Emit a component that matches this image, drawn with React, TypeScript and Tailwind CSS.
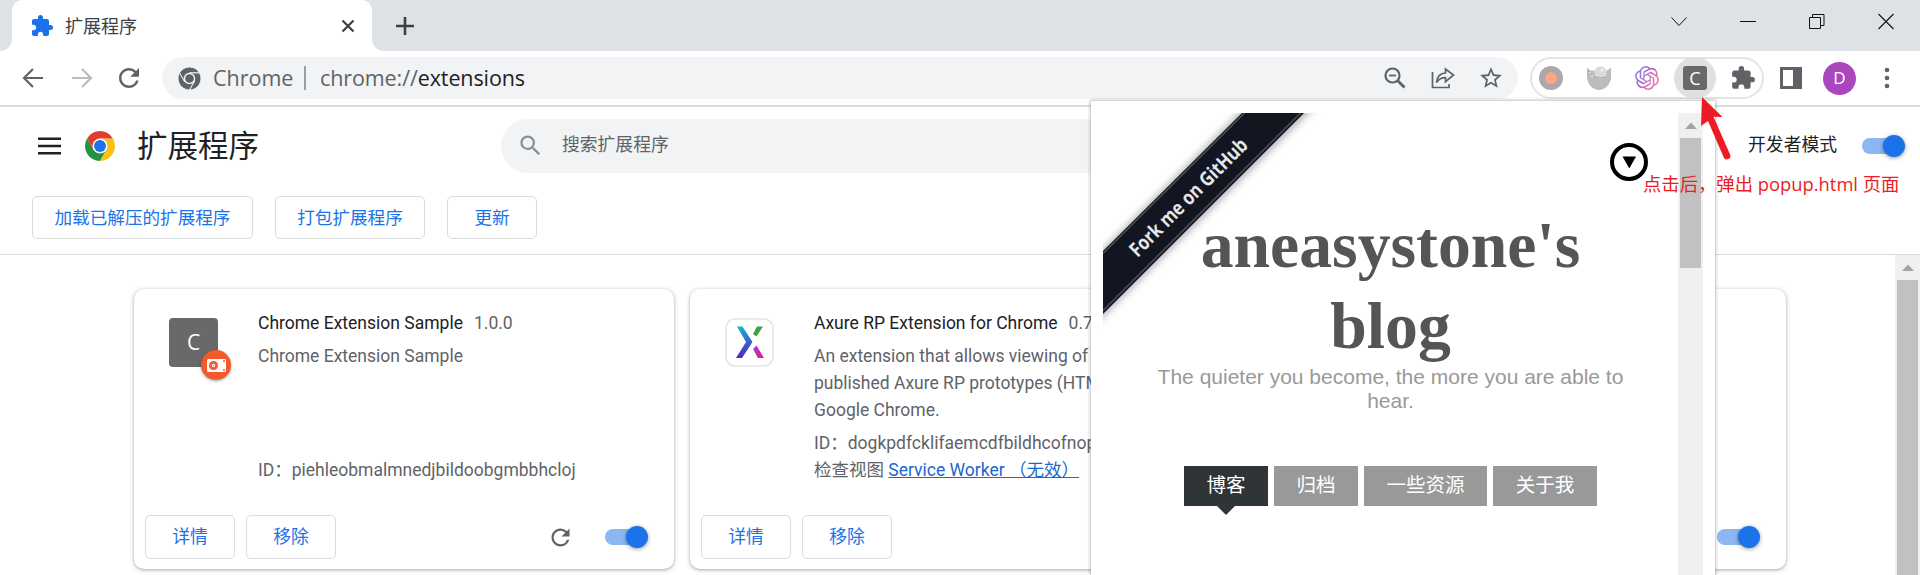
import React from "react";
import { MdExtension, MdRefresh, MdSearch, MdStarBorder } from "react-icons/md";
import { SiOpenai } from "react-icons/si";

const cjk = "font-['Roboto','Noto_Sans_CJK_SC',sans-serif]";

function ChromeLogo({ className, mono }: { className: string; mono?: boolean }) {
  const red = mono ? "#5f6368" : "#e33b2e";
  const green = mono ? "#5f6368" : "#229342";
  const yellow = mono ? "#5f6368" : "#fbc116";
  const gap = mono ? "#f1f3f4" : "none";
  return (
    <svg viewBox="0 0 48 48" className={className}>
      <g stroke={gap} strokeWidth={mono ? 2 : 0}>
        <path fill={green} d="M13.61 30 3.22 12A24 24 0 0 0 24 48l10.39-18z" />
        <path fill={yellow} d="M34.39 30 24 48A24 24 0 0 0 44.78 12H24z" />
        <path fill={red} d="M24 12h20.78A24 24 0 0 0 3.22 12l10.39 18z" />
      </g>
      <circle cx="24" cy="24" r="12" fill={mono ? "#f1f3f4" : "#fff"} />
      <circle cx="24" cy="24" r={mono ? 9 : 9.5} fill={mono ? "#5f6368" : "#1a73e8"} />
    </svg>
  );
}

function TabStrip() {
  return (
    <div className="flex h-[51px] shrink-0 bg-[#dee1e6]">
      <svg viewBox="0 0 12 12" className="h-3 w-3 self-end">
        <path d="M12 0v12H0A12 12 0 0 0 12 0z" fill="#fff" />
      </svg>
      <div className="flex w-[360px] items-center rounded-t-[10px] bg-white pl-[18px] pr-[17px] pt-[1px]">
        <MdExtension className="h-6 w-6 text-[#1a73e8]" />
        <span className="ml-[11px] text-[18px] text-[#3c4043]">扩展程序</span>
        <svg viewBox="0 0 14 14" className="ml-auto h-[14px] w-[14px]" stroke="#3c4043" strokeWidth="2.2">
          <path d="M1.5 1.5l11 11M12.500 1.5l-11 11" />
        </svg>
      </div>
      <svg viewBox="0 0 12 12" className="h-3 w-3 self-end">
        <path d="M0 0v12h12A12 12 0 0 1 0 0z" fill="#fff" />
      </svg>
      <svg viewBox="0 0 18 18" className="ml-3 mt-[17px] h-[18px] w-[18px]" stroke="#3c4043" strokeWidth="2.6">
        <path d="M9 0v18M0 9h18" />
      </svg>
      <div className="ml-auto mr-[26px] mt-[13px] flex h-[17px] items-center gap-[53px]">
        <svg viewBox="0 0 16 17" className="h-[17px] w-4" fill="none" stroke="#111" strokeWidth="1">
          <path d="M.5 4.500 8 12.500l7.500-8" />
        </svg>
        <svg viewBox="0 0 16 17" className="h-[17px] w-4" stroke="#111" strokeWidth="1">
          <path d="M0 8.500h16" />
        </svg>
        <svg viewBox="0 0 16 17" className="h-[17px] w-4" fill="none" stroke="#111" strokeWidth="1">
          <path d="M.5 4.500h11v11H.5zM3.500 4.500v-3h11.500v11h-3.500" />
        </svg>
        <svg viewBox="0 0 16 17" className="h-[17px] w-4" stroke="#111" strokeWidth="1.1">
          <path d="M.5 1l15 15M15.500 1l-15 15" />
        </svg>
      </div>
    </div>
  );
}

function Toolbar() {
  return (
    <div className="flex h-[56px] shrink-0 items-start border-b-2 border-[#dadce0] bg-white pt-[6px]">
      <div className="flex h-[42px] items-center pl-[22px]">
        <svg viewBox="0 0 22 20" className="h-5 w-[22px]" fill="none" stroke="#5f6368" strokeWidth="2.2">
          <path d="M21 10H2.500M11 1l-9 9 9 9" />
        </svg>
        <svg viewBox="0 0 22 20" className="ml-[27px] h-5 w-[22px]" fill="none" stroke="#babcbe" strokeWidth="2.2">
          <path d="M1 10h18.500M11 1l9 9-9 9" />
        </svg>
        <MdRefresh className="ml-[21px] h-[30px] w-[30px] text-[#5f6368]" />
      </div>
      <div className="ml-[18px] flex h-[42px] w-[1356px] items-center rounded-full bg-[#f1f3f4] pl-4 pr-[14px]">
        <ChromeLogo mono className="h-[23px] w-[23px]" />
        <span className="ml-[12px] flex items-center font-['Open_Sans','Noto_Sans',sans-serif] text-[21.5px] leading-none text-[#5f6368]">
          <span className="w-[91px]">Chrome</span>
          <span className="h-6 w-[2px] bg-[#9aa0a6]" />
          <span className="ml-[14px] tracking-[-0.1px]">
            chrome://<span className="text-[#202124]">extensions</span>
          </span>
        </span>
        <svg viewBox="0 0 22 22" className="ml-auto h-[22px] w-[22px]" fill="none" stroke="#5f6368" strokeWidth="2.2">
          <circle cx="8.500" cy="8.500" r="7" />
          <path d="M5 8.500h7" strokeWidth="1.800" />
          <path d="M13.500 13.500l7 7" strokeWidth="2.800" />
        </svg>
        <svg viewBox="0 0 24 22" className="ml-[25px] h-[22px] w-6" fill="none" stroke="#5f6368" strokeWidth="1.700">
          <path d="M1.500 5v15.500H18V17" />
          <path d="M14.500 2v4C9 6.300 6 9.500 5.500 15.500c2.500-3.800 5-4.800 9-4.800v4L22.500 8z" />
        </svg>
        <MdStarBorder className="ml-[23px] h-[26px] w-[26px] text-[#5f6368]" />
      </div>
      <div className="ml-3 flex h-[42px] w-[234px] items-center rounded-full border-2 border-[#e3e4e6] bg-white pl-[7px]">
        <span className="flex h-6 w-6 items-center justify-center rounded-full bg-[#a9a9a9]">
          <span className="h-3 w-3 rounded-full bg-[#ffa585]" />
        </span>
        <svg viewBox="0 0 24 24" className="ml-6 h-6 w-6">
          <path
            d="M0 1.500l3.500 3h17l3.500-3c.8 4 .6 9-.8 13.500C21.500 20.500 17 24 12 24S2.500 20.500.8 15C-.5 10.500-.5 5.500 0 1.500z"
            fill="#bcbcbc"
          />
          <circle cx="13.500" cy="6.500" r="6.300" fill="#dadada" />
          <path d="M1 4c2 5.500 9 9.500 18.500 7" fill="none" stroke="#a6a6a6" strokeWidth="1" />
          <circle cx="5" cy="10" r="1" fill="#eee" />
          <circle cx="3" cy="6.500" r=".8" fill="#eee" />
          <circle cx="15" cy="4" r="1.500" fill="#f2f2f2" />
        </svg>
        <span className="ml-6">
          <svg className="h-0 w-0" viewBox="0 0 1 1">
            <defs>
              <linearGradient id="gpt" x1="0" y1="0" x2="1" y2="0.6">
                <stop offset="0" stopColor="#7d9cf5" />
                <stop offset=".5" stopColor="#a865c4" />
                <stop offset="1" stopColor="#f07fa0" />
              </linearGradient>
            </defs>
          </svg>
          <SiOpenai className="h-6 w-6" style={{ fill: "url(#gpt)" }} />
        </span>
        <span className="ml-[15px] flex h-[42px] w-[42px] items-center justify-center rounded-full bg-[#e0e0e0]">
          <span className="flex h-6 w-6 items-center justify-center rounded-[3px] bg-[#696969] font-['Open_Sans',sans-serif] text-[18px] leading-none text-white">
            C
          </span>
        </span>
        <MdExtension className="ml-[14px] h-[26px] w-[26px] text-[#5f6368]" />
      </div>
      <div className="flex h-[42px] items-center">
        <span className="ml-4 flex h-[22px] w-[22px] justify-end border-[3px] border-r-0 border-[#5f6368]">
          <span className="h-full w-[9px] bg-[#5f6368]" />
        </span>
        <span className="ml-[21px] flex h-[33px] w-[33px] items-center justify-center rounded-full bg-[#ab47bc] font-['Open_Sans',sans-serif] text-[17px] text-white">
          D
        </span>
        <svg viewBox="0 0 6 22" className="ml-[28px] h-[22px] w-[6px]" fill="#5f6368">
          <circle cx="3" cy="3" r="2.300" />
          <circle cx="3" cy="11" r="2.300" />
          <circle cx="3" cy="19" r="2.300" />
        </svg>
      </div>
    </div>
  );
}

function Toggle() {
  return (
    <span className="flex h-[22px] w-[43px] items-center">
      <span className="h-4 w-[32px] rounded-l-full bg-[#8cb7f3]" />
      <span className="-ml-[11px] h-[22px] w-[22px] shrink-0 rounded-full bg-[#1a73e8] shadow-[0_1px_4px_rgba(0,0,0,0.4)]" />
    </span>
  );
}

function Btn({ children, className }: { children: React.ReactNode; className: string }) {
  return (
    <button className={`flex items-center justify-center rounded-[5px] border border-[#dadce0] pt-[1px] text-[#1a73e8] ${className}`}>
      {children}
    </button>
  );
}

function PageHeader() {
  return (
    <div className="flex h-[148px] shrink-0 flex-col border-b border-[#dadce0]">
      <div className="flex h-[77px] items-center pl-[38px]">
        <svg viewBox="0 0 23 18" className="h-[18px] w-[23px]" fill="#202124">
          <path d="M0 .5h23v2.500H0zM0 7.800h23v2.500H0zM0 15h23v2.500H0z" />
        </svg>
        <ChromeLogo className="ml-6 h-[30px] w-[30px]" />
        <h1 className="ml-[22px] w-[364px] pt-[3px] text-[30.5px] leading-none text-[#202124]">扩展程序</h1>
        <div className="flex h-[54px] w-[850px] items-center rounded-full bg-[#f1f3f4] pl-4">
          <MdSearch className="h-[27px] w-[27px] text-[#8a8d91]" />
          <span className="ml-[18px] text-[17.800px] text-[#5f6368]">搜索扩展程序</span>
        </div>
        <span className="ml-auto text-[17.800px] text-[#202124]">开发者模式</span>
        <span className="ml-[25px] mr-[15px]">
          <Toggle />
        </span>
      </div>
      <div className="mt-[12px] flex gap-[22px] pl-8">
        <Btn className="h-[43px] w-[221px] text-[17.600px]">加载已解压的扩展程序</Btn>
        <Btn className="h-[43px] w-[150px] text-[17.600px]">打包扩展程序</Btn>
        <Btn className="h-[43px] w-[90px] text-[17.600px]">更新</Btn>
      </div>
    </div>
  );
}

interface CardProps {
  icon: React.ReactNode;
  name: string;
  version: string;
  lines: string[];
  footer: React.ReactNode;
  reload?: boolean;
}

function Card({ icon, name, version, lines, footer, reload }: CardProps) {
  return (
    <div className="flex h-[280px] w-[540px] shrink-0 flex-col rounded-[10px] bg-white shadow-[0_1px_3px_rgba(60,64,67,0.3),0_1px_4px_1px_rgba(60,64,67,0.15)]">
      <div className="flex h-[226px] pt-[21px]">
        <div className="w-[124px] shrink-0 pl-[35px] pt-2">{icon}</div>
        <div className="flex h-[174px] flex-col whitespace-nowrap text-[17.500px] leading-[27px] text-[#5f6368]">
          <div className="flex gap-[11px]">
            <span className="text-[#202124]">{name}</span>
            <span>{version}</span>
          </div>
          <div className="mt-[6px]">
            {lines.map((l) => (
              <div key={l}>{l}</div>
            ))}
          </div>
          <div className="mt-auto">{footer}</div>
        </div>
      </div>
      <div className="flex h-11 items-center gap-[11px] pl-[11px] pr-[26px]">
        <Btn className="h-11 w-[90px] text-[17.800px]">详情</Btn>
        <Btn className="h-11 w-[90px] text-[17.800px]">移除</Btn>
        <span className="ml-auto flex items-center gap-[31px]">
          {reload && <MdRefresh className="h-[27px] w-[27px] text-[#5f6368]" />}
          <Toggle />
        </span>
      </div>
    </div>
  );
}

function SampleIcon() {
  return (
    <span className="relative flex h-[49px] w-[49px] items-center justify-center rounded-[4px] bg-[#696969] font-['Open_Sans',sans-serif] text-[21px] text-white">
      C
      <span className="absolute -bottom-[13px] -right-[13px] flex h-[30px] w-[30px] items-center justify-center rounded-full bg-[#f4592b] shadow-[0_1px_3px_rgba(0,0,0,0.4)]">
        <svg viewBox="0 0 19 13" className="h-[13px] w-[19px]">
          <rect width="19" height="13" rx="1.500" fill="#fff" />
          <circle cx="6.500" cy="6.500" r="4.500" fill="#f4592b" />
          <circle cx="6.500" cy="6.500" r="1.700" fill="#fff" />
          <circle cx="6.500" cy="6.500" r=".7" fill="#f4592b" />
          <circle cx="17" cy="2" r="1" fill="#f4592b" />
          <circle cx="17" cy="11" r="1" fill="#f4592b" />
        </svg>
      </span>
    </span>
  );
}

function AxureIcon() {
  return (
    <svg viewBox="0 0 49 49" className="h-[49px] w-[49px]">
      <defs>
        <linearGradient id="ax1" x1="0" y1="0" x2="0" y2="1">
          <stop offset="0" stopColor="#10b8d0" />
          <stop offset=".5" stopColor="#3a5fd0" />
          <stop offset="1" stopColor="#4a2bc0" />
        </linearGradient>
        <linearGradient id="ax2" x1="0" y1="0" x2="1" y2="1">
          <stop offset="0" stopColor="#a040d8" />
          <stop offset="1" stopColor="#f0148c" />
        </linearGradient>
      </defs>
      <rect x="1" y="1" width="47" height="47" rx="9" fill="#fff" stroke="#e2e4e6" strokeWidth="1.500" />
      <path d="M12 8.500h5.500L27.500 24 17 40h-6l10-16z" fill="url(#ax1)" />
      <path d="M32 8.500h6L31.500 18.500 28 16z" fill="#43a143" />
      <path d="M28 31l3.500-3.500L39 40h-6z" fill="url(#ax2)" />
    </svg>
  );
}

function Ribbon() {
  return (
    <svg viewBox="0 0 220 220" className="absolute left-0 top-0 h-[220px] w-[220px]">
      <defs>
        <filter id="soft" x="-20%" y="-20%" width="140%" height="140%">
          <feGaussianBlur stdDeviation="5" />
        </filter>
      </defs>
      <path d="M-30 168 168-30h66L-30 232z" fill="#000" opacity=".38" filter="url(#soft)" />
      <path d="M0 138 139 0h62L0 201z" fill="#121621" />
      <path d="M0 140.500 141.500 0M0 197.500 197.500 0" stroke="#4c505b" strokeWidth="1.500" />
      <text
        x="86"
        y="91"
        transform="rotate(-45 86 85)"
        textAnchor="middle"
        textLength="158"
        lengthAdjust="spacingAndGlyphs"
        fill="#e6e6ea"
        className="font-['Open_Sans',sans-serif] text-[20px] font-bold"
      >
        Fork me on GitHub
      </text>
    </svg>
  );
}

function ScrollBar({ thumb }: { thumb: string }) {
  return (
    <div className="flex h-full w-[25px] shrink-0 flex-col items-center bg-[#f0f0f0]">
      <svg viewBox="0 0 12 7" className="mb-[9px] mt-[9px] h-[7px] w-3 shrink-0" fill="#a3a3a3">
        <path d="M6 .5l6 6.500H0z" />
      </svg>
      <div className={`w-[21px] shrink-0 bg-[#c1c1c1] ${thumb}`} />
    </div>
  );
}

function Popup() {
  return (
    <div className="absolute left-[1091px] top-[101px] flex h-[480px] w-[624px] bg-white pl-3 pr-3 pt-3 shadow-[0_0_3px_1px_rgba(0,0,0,0.25)]">
      <div className="relative flex flex-1 flex-col items-center overflow-hidden">
        <Ribbon />
        <svg viewBox="0 0 38 38" className="absolute left-[507px] top-[30px] h-[38px] w-[38px]">
          <circle cx="19" cy="19" r="17" fill="#fff" stroke="#000" strokeWidth="4" />
          <path d="M12.500 13.500h13.500l-6.700 12z" fill="#000" />
        </svg>
        <h2 className="mt-[91px] text-center font-['Liberation_Serif',serif] text-[65.700px] font-bold leading-[81px] text-[#555]">
          aneasystone's
          <br />
          blog
        </h2>
        <p className="-mt-[1px] text-center font-['Liberation_Sans',sans-serif] text-[21px] leading-[24px] text-[#999]">
          The quieter you become, the more you are able to
          <br />
          hear.
        </p>
        <div className="mt-[53px] flex gap-[6px] text-[19.500px] text-white">
          <span className="relative flex h-10 w-[84px] items-center justify-center bg-[#2f3436]">
            博客
            <svg viewBox="0 0 18 9" className="absolute left-[33px] top-10 h-[9px] w-[18px]" fill="#2f3436">
              <path d="M0 0h18L9 9z" />
            </svg>
          </span>
          <span className="flex h-10 w-[84px] items-center justify-center bg-[#999]">归档</span>
          <span className="flex h-10 w-[123px] items-center justify-center bg-[#999]">一些资源</span>
          <span className="flex h-10 w-[104px] items-center justify-center bg-[#999]">关于我</span>
        </div>
      </div>
      <ScrollBar thumb="h-[130px]" />
    </div>
  );
}

export default function App() {
  return (
    <div className={`relative flex h-[575px] w-[1920px] flex-col overflow-hidden bg-white ${cjk}`}>
      <TabStrip />
      <Toolbar />
      <PageHeader />
      <div className="flex min-h-0 flex-1 bg-white">
        <div className="flex flex-1 gap-4 pl-[134px] pt-[34px]">
          <Card
            icon={<SampleIcon />}
            name="Chrome Extension Sample"
            version="1.0.0"
            lines={["Chrome Extension Sample"]}
            footer="ID：piehleobmalmnedjbildoobgmbbhcloj"
            reload
          />
          <Card
            icon={<AxureIcon />}
            name="Axure RP Extension for Chrome"
            version="0.7"
            lines={["An extension that allows viewing of", "published Axure RP prototypes (HTML) in", "Google Chrome."]}
            footer={
              <>
                <div>ID：dogkpdfcklifaemcdfbildhcofnop</div>
                <div>
                  检查视图 <span className="text-[#1967d2] underline">Service Worker （无效）</span>
                </div>
              </>
            }
          />
          <Card icon={null} name="" version="" lines={[]} footer="" />
        </div>
        <ScrollBar thumb="h-[400px]" />
      </div>
      <Popup />
      <svg viewBox="0 0 40 70" className="absolute left-[1696px] top-[95px] h-[70px] w-10" fill="#ed1c24">
        <path d="M6 2l20.500 20-9-.3 16.700 38a3.500 3.500 0 0 1-6.300 3L12 26l-7 5z" />
      </svg>
      <div className="absolute left-[1643px] top-[171px] whitespace-pre font-['Open_Sans','Noto_Sans_CJK_SC',sans-serif] text-[18.350px] leading-[26px] text-[#ed1c24]">
        点击后，弹出 popup.html 页面
      </div>
    </div>
  );
}
